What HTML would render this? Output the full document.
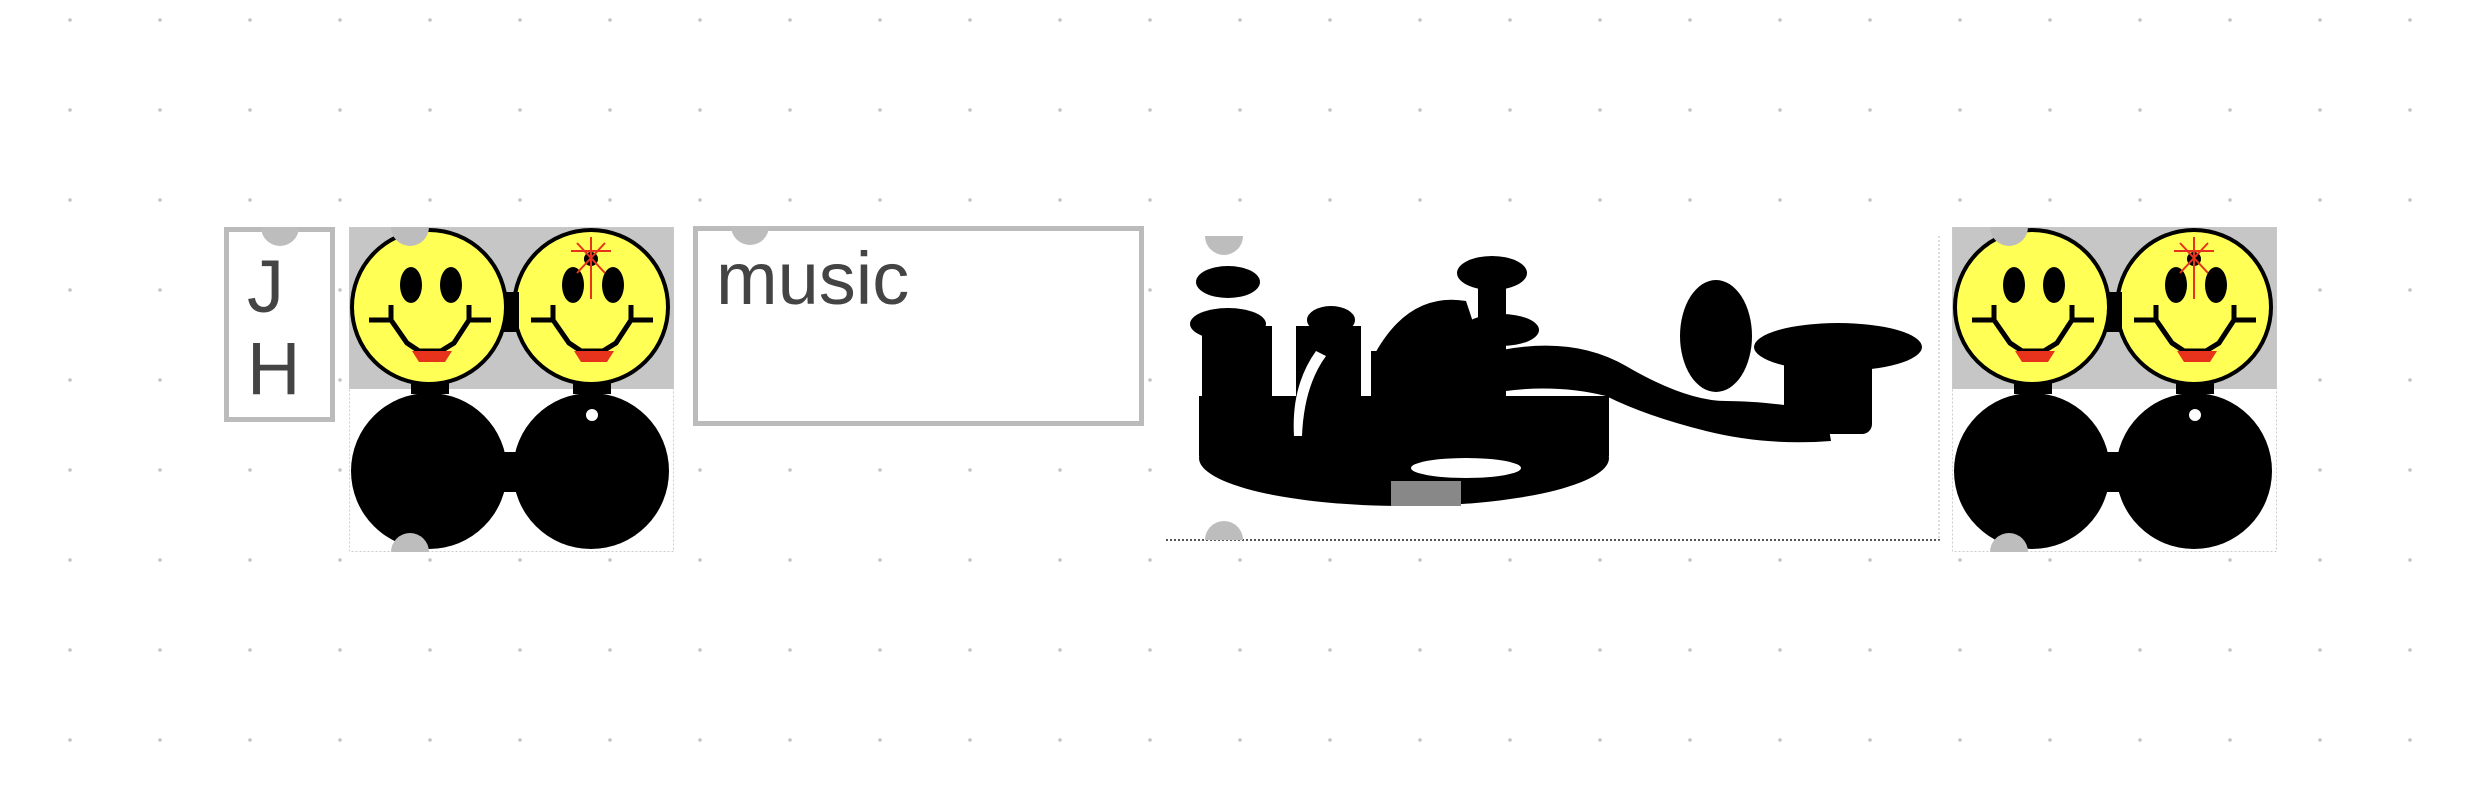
<!DOCTYPE html>
<html><head><meta charset="utf-8"><style>
html,body{margin:0;padding:0;background:#fff;width:2480px;height:804px;overflow:hidden;position:relative;font-family:"Liberation Sans",Arial,sans-serif}
.grid{position:absolute;left:0;top:0;width:2480px;height:804px;background-image:radial-gradient(circle,#c4c4c4 1.6px,transparent 2px);background-size:90px 90px;background-position:25px -25px}
.box{position:absolute;border:5px solid #bbb;box-sizing:border-box;background:#fff;color:#444}
.h{position:absolute;width:38px;height:38px;border-radius:50%;background:#bdbdbd}
</style></head><body>
<div class="grid"></div>

<div class="box" style="left:224px;top:227px;width:111px;height:195px;font-size:74px;line-height:82px;padding:14px 0 0 18px">J<br>H</div>
<div class="box" style="left:693px;top:226px;width:451px;height:200px;font-size:74px;line-height:80px;padding:8px 0 0 18px">music</div>

<svg style="position:absolute;left:349px;top:227px" width="325" height="325" viewBox="0 0 325 325">
<defs>
<g id="face">
<circle cx="80" cy="80" r="77" fill="#ffff55" stroke="#000" stroke-width="4"/>
<ellipse cx="62" cy="58" rx="11" ry="18"/><ellipse cx="102" cy="58" rx="11" ry="18"/>
<path d="M20 93H42M42 78V93L58 116L70 124H92L105 116L120 93V78M120 93H142" fill="none" stroke="#000" stroke-width="5"/>
<path d="M63 124H103L96 135H70Z" fill="#e8331c"/>
<rect x="62" y="155" width="38" height="12"/>
<circle cx="80" cy="244" r="78"/>
</g>
</defs>
<rect x="0" y="0" width="325" height="162" fill="#c6c6c6"/>
<rect x="0.5" y="0.5" width="324" height="324" fill="none" stroke="#ccc" stroke-dasharray="2 2"/>
<use href="#face"/>
<g transform="translate(162,0)"><use href="#face"/></g>
<rect x="155" y="65" width="15" height="40"/><rect x="155" y="225" width="15" height="40"/>
<circle cx="242" cy="32" r="7"/><path d="M222 24H262M242 10V72M228 16L256 46M256 16L228 46" stroke="#e8331c" stroke-width="2"/>
<circle cx="243" cy="188" r="6" fill="#fff"/>
</svg>
<div class="h" style="left:391px;top:208px;clip-path:inset(19px 0 0 0)"></div>
<div class="h" style="left:391px;top:533px;clip-path:inset(0 0 19px 0)"></div>

<svg style="position:absolute;left:1952px;top:227px" width="325" height="325" viewBox="0 0 325 325">
<rect x="0" y="0" width="325" height="162" fill="#c6c6c6"/>
<rect x="0.5" y="0.5" width="324" height="324" fill="none" stroke="#ccc" stroke-dasharray="2 2"/>
<use href="#face"/>
<g transform="translate(162,0)"><use href="#face"/></g>
<rect x="155" y="65" width="15" height="40"/><rect x="155" y="225" width="15" height="40"/>
<circle cx="242" cy="32" r="7"/><path d="M222 24H262M242 10V72M228 16L256 46M256 16L228 46" stroke="#e8331c" stroke-width="2"/>
<circle cx="243" cy="188" r="6" fill="#fff"/>
</svg>
<div class="h" style="left:1990px;top:208px;clip-path:inset(19px 0 0 0)"></div>
<div class="h" style="left:1990px;top:533px;clip-path:inset(0 0 19px 0)"></div>

<svg style="position:absolute;left:1166px;top:236px" width="775" height="306" viewBox="0 0 775 306">
<rect x="0" y="0" width="774" height="305" fill="#fff"/>
<line x1="0" y1="304" x2="774" y2="304" stroke="#555" stroke-width="2" stroke-dasharray="2 2"/>
<line x1="773" y1="0" x2="773" y2="305" stroke="#bbb" stroke-dasharray="2 2"/>
<g fill="#000">
<ellipse cx="238" cy="222" rx="205" ry="48"/>
<rect x="33" y="160" width="410" height="60"/>
<ellipse cx="62" cy="46" rx="32" ry="16"/>
<ellipse cx="62" cy="88" rx="38" ry="16"/>
<rect x="36" y="90" width="70" height="120"/>
<ellipse cx="165" cy="84" rx="24" ry="14"/>
<rect x="130" y="90" width="65" height="115"/>
<ellipse cx="326" cy="37" rx="35" ry="17"/>
<ellipse cx="335" cy="94" rx="38" ry="16"/>
<rect x="312" y="45" width="28" height="130"/>
<path d="M205 125Q240 55 300 65L320 125Z"/>
<rect x="205" y="115" width="115" height="70"/>
<path d="M310 120Q400 95 460 130T560 165T660 175L665 205Q600 210 540 195T440 160Q380 145 310 160Z"/>
<ellipse cx="550" cy="100" rx="36" ry="56"/>
<ellipse cx="672" cy="111" rx="84" ry="24"/>
<rect x="618" y="120" width="88" height="78" rx="10"/>
</g>
<g fill="#fff">
<path d="M150 115Q125 150 128 200L136 200Q138 150 160 120Z"/>
<ellipse cx="300" cy="232" rx="55" ry="10"/>
</g>
<rect x="225" y="245" width="70" height="25" fill="#888"/>
</svg>
<div class="h" style="left:1205px;top:217px;clip-path:inset(19px 0 0 0)"></div>
<div class="h" style="left:1205px;top:521px;clip-path:inset(0 0 19px 0)"></div>
<div class="h" style="left:261px;top:208px;clip-path:inset(19px 0 0 0)"></div>
<div class="h" style="left:731px;top:207px;clip-path:inset(19px 0 0 0)"></div>
</body></html>
